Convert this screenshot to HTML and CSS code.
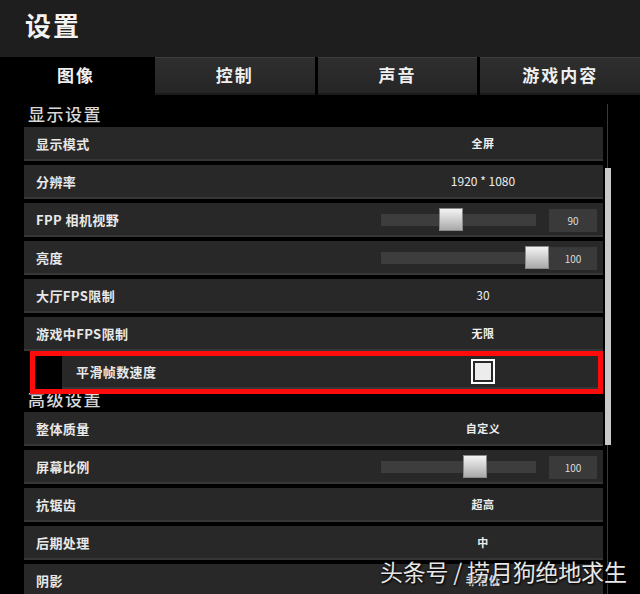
FILE: index.html
```html
<!DOCTYPE html>
<html lang="zh-CN">
<head>
<meta charset="utf-8">
<title>设置</title>
<link rel="stylesheet" href="styles.css">
</head>
<body>
<div class="page">
  <header class="header">设置</header>
  <nav class="tabs">
    <div class="tab active">图像</div>
    <div class="tab">控制</div>
    <div class="tab">声音</div>
    <div class="tab">游戏内容</div>
  </nav>
  <main class="content">
    <div class="list">
      <div class="section-title">显示设置</div>
      <div class="row"><div class="label">显示模式</div><div class="value">全屏</div></div>
      <div class="row"><div class="label">分辨率</div><div class="value num">1920 * 1080</div></div>
      <div class="row"><div class="label">FPP 相机视野</div>
        <div class="slider"><div class="track"><div class="thumb" style="left:58px"></div></div><div class="box">90</div></div>
      </div>
      <div class="row"><div class="label">亮度</div>
        <div class="slider"><div class="track"><div class="thumb" style="left:144px"></div></div><div class="box">100</div></div>
      </div>
      <div class="row"><div class="label">大厅FPS限制</div><div class="value num">30</div></div>
      <div class="row"><div class="label">游戏中FPS限制</div><div class="value">无限</div></div>
      <div class="row sub"><div class="label">平滑帧数速度</div><div class="value"><span class="check"></span></div><div class="highlight"></div></div>
      <div class="section-title">高级设置</div>
      <div class="row"><div class="label">整体质量</div><div class="value">自定义</div></div>
      <div class="row"><div class="label">屏幕比例</div>
        <div class="slider"><div class="track"><div class="thumb" style="left:82px"></div></div><div class="box">100</div></div>
      </div>
      <div class="row"><div class="label">抗锯齿</div><div class="value">超高</div></div>
      <div class="row"><div class="label">后期处理</div><div class="value">中</div></div>
      <div class="row"><div class="label">阴影</div><div class="value">非常低</div></div>
    </div>
    <div class="scroll"><div class="scroll-thumb"></div></div>
  </main>
  <div class="watermark">头条号 / 捞月狗绝地求生</div>
</div>
</body>
</html>
```
FILE: styles.css
```css
* { box-sizing: border-box; }
html, body { margin: 0; padding: 0; background: #000; }
body {
  width: 640px;
  height: 594px;
  overflow: hidden;
  font-family: "Noto Sans CJK SC", "Noto Sans", sans-serif;
  color: #eee;
}
.page { position: relative; width: 640px; height: 594px; overflow: hidden; }

.header {
  height: 57px;
  background: #1e1e1e;
  display: flex;
  align-items: center;
  padding-left: 25px;
  padding-bottom: 8px;
  font-size: 26px;
  line-height: 1;
  font-weight: 700;
  letter-spacing: 2px;
  color: #f2f2f2;
}

.tabs {
  display: grid;
  grid-template-columns: 152px 1fr 1fr 1fr;
  column-gap: 3px;
  height: 38px;
  background: #000;
}
.tab {
  display: flex;
  align-items: center;
  justify-content: center;
  font-size: 17px;
  line-height: 1;
  font-weight: 700;
  letter-spacing: 2px;
  color: #f0f0f0;
  background: linear-gradient(#2f2f2f, #252525);
  border-top: 1px solid #3e3e3e;
  border-bottom: 2px solid #1a1a1a;
  padding-bottom: 3px;
}
.tab.active { background: #000; border-color: #000; }

.content {
  display: flex;
  padding-top: 9px;
}
.list {
  margin-left: 24px;
  width: 579px;
}
.section-title {
  height: 23px;
  line-height: 20px;
  padding-left: 4px;
  font-size: 17px;
  font-weight: 500;
  letter-spacing: 1.5px;
  color: #d8d8d8;
}
.row {
  position: relative;
  height: 34px;
  display: grid;
  grid-template-columns: 357px 1fr;
  align-items: center;
  padding-bottom: 2px;
  background: #282828;
  box-shadow: inset 0 -2px 0 #363636;
}
.row + .row { margin-top: 4px; }
.label {
  padding-left: 12px;
  font-size: 13px;
  line-height: 1;
  font-weight: 700;
  letter-spacing: 0.4px;
  color: #e8e8e8;
}
.value {
  text-align: center;
  padding-right: 18px;
  font-size: 11px;
  line-height: 1;
  font-weight: 700;
  color: #eeeeee;
  letter-spacing: 0.5px;
}
.value.num { font-size: 12px; font-weight: 400; letter-spacing: 0; }

.slider { display: flex; align-items: center; margin-top: 2px; }
.track {
  position: relative;
  width: 155px;
  height: 12px;
  background: #3d3d3d;
}
.thumb {
  position: absolute;
  top: -6px;
  width: 24px;
  height: 23px;
  background: linear-gradient(#f4f4f4, #a9a9a9);
  border: 1px solid #8a8a8a;
}
.box {
  margin-left: 13px;
  width: 48px;
  height: 23px;
  background: #3a3a3a;
  font-size: 10px;
  color: #dddddd;
  display: flex;
  align-items: center;
  justify-content: center;
}

.row.sub {
  margin-left: 38px;
  width: 536px;
  grid-template-columns: 319px 1fr;
}
.row.sub .label { padding-left: 14px; }
.row.sub .value { padding-right: 13px; display: flex; justify-content: center; }
.check {
  display: block;
  width: 24px;
  height: 25px;
  border: 2px solid #ffffff;
  padding: 2px;
  background: #ececec;
  background-clip: content-box;
}
.highlight {
  position: absolute;
  left: -32px;
  top: -4px;
  right: -5px;
  bottom: -5px;
  border: 5px solid #ff0b0b;
}

.scroll {
  margin-left: 2px;
  width: 6px;
  height: 500px;
  background: linear-gradient(to right, transparent 2px, #3a3a3a 2px, #3a3a3a 3px, transparent 3px);
}
.scroll-thumb {
  margin-top: 64px;
  height: 277px;
  background: #c9c9c9;
}

.watermark {
  position: absolute;
  left: 380px;
  top: 554px;
  font-size: 23px;
  font-weight: 400;
  letter-spacing: -0.2px;
  color: #e6e6e6;
  white-space: nowrap;
  text-shadow: 1px 1px 2px #000, 0 0 3px rgba(0,0,0,0.7);
}
```
